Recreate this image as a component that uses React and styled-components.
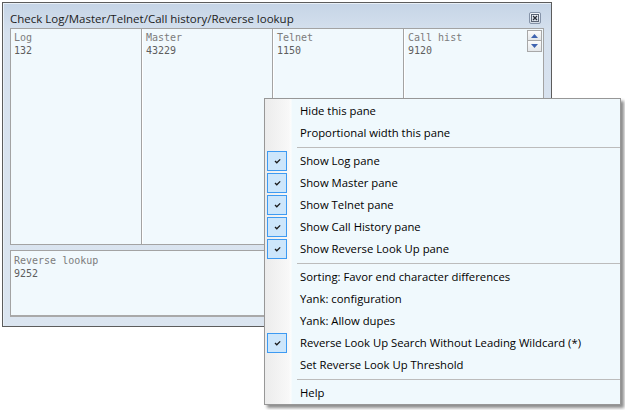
import React from "react";
import styled, { createGlobalStyle } from "styled-components";

const Global = createGlobalStyle`
  body {
    margin: 0;
    background: #ffffff;
    font-family: "Open Sans", "Noto Sans", sans-serif;
  }
`;

const panes = [
  { name: "Log", count: "132", width: 131 },
  { name: "Master", count: "43229", width: 131 },
  { name: "Telnet", count: "1150", width: 131 },
  { name: "Call hist", count: "9120" },
];

const menu = [
  { label: "Hide this pane" },
  { label: "Proportional width this pane" },
  "sep",
  { label: "Show Log pane", checked: true },
  { label: "Show Master pane", checked: true },
  { label: "Show Telnet pane", checked: true },
  { label: "Show Call History pane", checked: true },
  { label: "Show Reverse Look Up pane", checked: true },
  "sep",
  { label: "Sorting: Favor end character differences" },
  { label: "Yank: configuration" },
  { label: "Yank: Allow dupes" },
  { label: "Reverse Look Up Search Without Leading Wildcard (*)", checked: true },
  { label: "Set Reverse Look Up Threshold" },
  "sep",
  { label: "Help" },
];

export default function App() {
  return (
    <Page>
      <Global />
      <Window>
        <TitleBar>
          <Title>Check Log/Master/Telnet/Call history/Reverse lookup</Title>
          <CloseBtn>
            <svg width="10" height="10" viewBox="0 0 10 10">
              <rect x="1.5" y="1.5" width="7" height="7" fill="none" stroke="#5b6474" strokeWidth="1" />
              <path d="M3 3 L7 7 M7 3 L3 7" stroke="#2a2f38" strokeWidth="1.3" />
            </svg>
          </CloseBtn>
        </TitleBar>

        <UpperGroup>
          {panes.map((p, i) => (
            <Pane key={p.name} $width={p.width} $last={i === panes.length - 1}>
              <PaneText>
                <PaneHead>{p.name}</PaneHead>
                <PaneCount>{p.count}</PaneCount>
              </PaneText>
              {i === panes.length - 1 && (
                <ScrollCol>
                  <ScrollBtn>
                    <svg width="7" height="4" viewBox="0 0 7 4"><path d="M0 4 L3.5 0 L7 4 Z" fill="#3f63b0" /></svg>
                  </ScrollBtn>
                  <ScrollBtn>
                    <svg width="7" height="4" viewBox="0 0 7 4"><path d="M0 0 L7 0 L3.5 4 Z" fill="#3f63b0" /></svg>
                  </ScrollBtn>
                </ScrollCol>
              )}
            </Pane>
          ))}
        </UpperGroup>

        <ReversePane>
          <PaneHead>Reverse lookup</PaneHead>
          <PaneCount>9252</PaneCount>
        </ReversePane>
      </Window>

      <Menu>
        {menu.map((m, i) =>
          m === "sep" ? (
            <Separator key={"s" + i} />
          ) : (
            <MenuItem key={m.label}>
              <CheckSlot $checked={m.checked}>
                {m.checked && (
                  <svg width="9" height="8" viewBox="0 0 9 8">
                    <path d="M2 4 L3.8 5.8 L7.2 2.4" fill="none" stroke="#1b1b1b" strokeWidth="1.3" />
                  </svg>
                )}
              </CheckSlot>
              <MenuLabel>{m.label}</MenuLabel>
            </MenuItem>
          )
        )}
      </Menu>
    </Page>
  );
}

const Page = styled.div`
  position: relative;
  width: 625px;
  height: 410px;
  padding: 2px 0 0 2px;
  box-sizing: border-box;
`;

const Window = styled.div`
  width: 550px;
  height: 325px;
  box-sizing: border-box;
  border: 1px solid #5c5c5c;
  background: linear-gradient(#c5d4e6, #d6e1ee 30px, #dbe5f0);
  box-shadow: inset 1px 1px 0 #e9f0f7;
  padding: 0 7px 0 7px;
  display: flex;
  flex-direction: column;
`;

const TitleBar = styled.div`
  height: 25px;
  box-sizing: border-box;
  padding-top: 8px;
  display: flex;
  justify-content: space-between;
  align-items: flex-start;
`;

const Title = styled.div`
  font-size: 11.5px;
  line-height: 15px;
  color: #1c1c1c;
`;

const CloseBtn = styled.div`
  width: 12px;
  height: 12px;
  margin: 1px 3px 0 0;
  box-sizing: border-box;
  border: 1px solid #8593a8;
  border-radius: 2px;
  background: linear-gradient(#f4f7fb, #d3dbe6);
  display: flex;
  align-items: center;
  justify-content: center;
`;

const UpperGroup = styled.div`
  height: 217px;
  box-sizing: border-box;
  display: flex;
  border: 1px solid #a3a3a3;
  background: #f1f9fd;
`;

const Pane = styled.div`
  width: ${(p) => (p.$width ? p.$width + "px" : "auto")};
  flex: ${(p) => (p.$width ? "none" : "1")};
  box-sizing: border-box;
  display: flex;
  border-right: ${(p) => (p.$last ? "none" : "1px solid #a3a3a3")};
  & + & {
    border-left: 1px solid #ffffff;
  }
`;

const PaneText = styled.div`
  flex: 1;
  padding: 2px 3px;
`;

const PaneHead = styled.div`
  font-family: "DejaVu Sans Mono", "Liberation Mono", monospace;
  font-size: 10px;
  line-height: 13px;
  color: #7c7c7c;
`;

const PaneCount = styled(PaneHead)`
  color: #5e5e5e;
`;

const ScrollCol = styled.div`
  width: 15px;
  margin: 1px 1px 0 0;
  display: flex;
  flex-direction: column;
`;

const ScrollBtn = styled.div`
  height: 11px;
  box-sizing: border-box;
  border: 1px solid #a8a8a8;
  background: linear-gradient(#fbfbfb, #e4e7ea);
  display: flex;
  align-items: center;
  justify-content: center;
  & + & {
    border-top: none;
  }
`;

const ReversePane = styled.div`
  height: 67px;
  margin-top: 5px;
  box-sizing: border-box;
  border: 1px solid #a3a3a3;
  border-bottom: 2px solid #a9a9a9;
  background: #f1f9fd;
  padding: 3px 3px;
`;

const Menu = styled.div`
  position: absolute;
  left: 264px;
  top: 98px;
  width: 357px;
  box-sizing: border-box;
  padding: 1px 0 0;
  border: 1px solid #979797;
  background: linear-gradient(to right, #ececec 0, #f8f8f8 24px, #fdfdfd 26px, #f0f9fd 27px);
  box-shadow: 3px 3px 3px rgba(0, 0, 0, 0.45);
`;

const MenuItem = styled.div`
  height: 22px;
  box-sizing: border-box;
  display: flex;
  align-items: center;
  padding: 0 0 2px 2px;
`;

const CheckSlot = styled.div`
  width: 20px;
  height: 20px;
  box-sizing: border-box;
  margin: 2px 13px 0 0;
  display: flex;
  align-items: center;
  justify-content: center;
  border: 1px solid ${(p) => (p.$checked ? "#3d9af2" : "transparent")};
  background: ${(p) => (p.$checked ? "#cde6fb" : "transparent")};
`;

const MenuLabel = styled.span`
  font-size: 11.3px;
  color: #000;
  white-space: nowrap;
`;

const Separator = styled.div`
  height: 1px;
  margin: 3px 0 2px 32px;
  background: #bcbcbc;
`;
